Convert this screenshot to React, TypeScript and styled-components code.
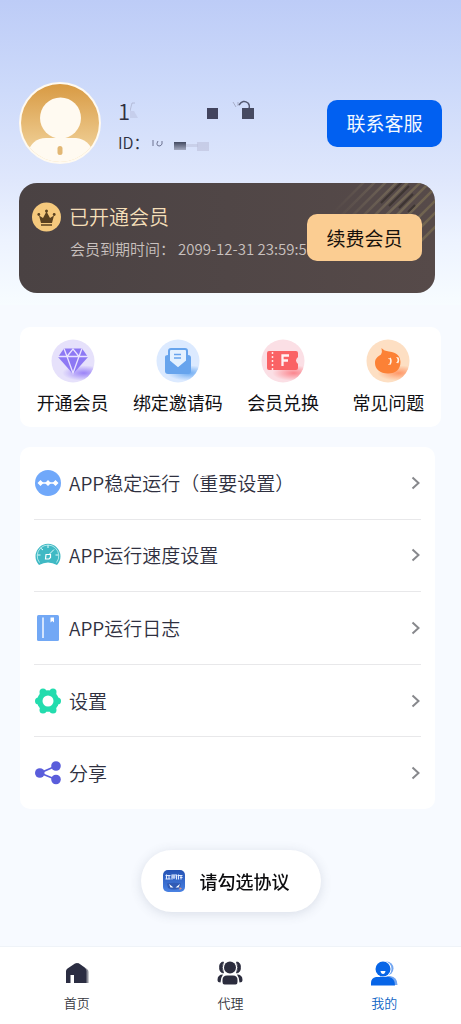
import React from 'react';
import styled, { createGlobalStyle } from 'styled-components';

const GlobalStyle = createGlobalStyle`
  * { box-sizing: border-box; }
  body {
    margin: 0;
    background: #f7faff;
    font-family: "Noto Sans CJK SC", sans-serif;
    font-weight: 350;
    color: #2f3040;
  }
  button { font-family: inherit; border: 0; padding: 0; cursor: pointer; }
  a { color: inherit; text-decoration: none; }
  svg { display: block; flex: none; }
`;

const Page = styled.div`
  display: flex;
  flex-direction: column;
  min-height: 100vh;
`;

const Hero = styled.header`
  padding: 82px 19px 12px;
  background: linear-gradient(#bdccf7 0, #cddafa 90px, #dfe7fc 180px, #edf3ff 240px, #f7fcff 100%);
`;

const Profile = styled.div`
  display: flex;
  align-items: center;
  gap: 17px;
  height: 82px;
`;

const Identity = styled.div`
  display: flex;
  flex: 1;
  flex-direction: column;
  gap: 4px;
  min-width: 0;
  padding-top: 6px;
`;

const IdentityLine = styled.div<{ $size: number }>`
  display: flex;
  align-items: center;
  height: 28px;
  font-size: ${(p) => p.$size}px;
  line-height: 28px;
`;

const ActionButton = styled.button<{ $tone: 'blue' | 'gold' }>`
  flex: none;
  width: 115px;
  height: 47px;
  border-radius: 10px;
  font-size: 19px;
  line-height: 28px;
  color: ${(p) => (p.$tone === 'blue' ? '#f4f9ff' : '#17120c')};
  background: ${(p) => (p.$tone === 'blue' ? '#0160f1' : '#fbcd92')};
`;

const MemberCard = styled.section`
  position: relative;
  overflow: hidden;
  height: 110px;
  margin: 19px 7px 0 0;
  padding: 19px 13px;
  border-radius: 18px;
  background: linear-gradient(90deg, #4a4243, #564a49);

  ${ActionButton} {
    position: absolute;
    top: 31px;
    right: 13px;
  }
`;

const Stripes = styled.svg`
  position: absolute;
  top: 0;
  right: 0;
`;

const MemberTitle = styled.h2`
  display: flex;
  align-items: center;
  gap: 7px;
  margin: 0;
  font-size: 20px;
  font-weight: 350;
  line-height: 30px;
  color: #f4dfb9;
`;

const Expiry = styled.p`
  display: flex;
  gap: 3px;
  margin: 5px 0 0 38px;
  font-size: 15px;
  line-height: 24px;
  white-space: nowrap;
  color: #c9c1bf;
`;

const Main = styled.main`
  display: flex;
  flex: 1;
  flex-direction: column;
  gap: 20px;
  padding: 22px 20px 40px;
`;

const Shortcuts = styled.nav`
  display: grid;
  grid-template-columns: repeat(4, 1fr);
  padding: 12px 0 10px;
  border-radius: 10px;
  background: #fff;
`;

const Shortcut = styled.a`
  display: flex;
  flex-direction: column;
  align-items: center;
  gap: 5px;
  padding-bottom: 1px;
  font-size: 18px;
  font-weight: 400;
  line-height: 28px;
  white-space: nowrap;
  color: #101013;
`;

const Menu = styled.nav`
  display: flex;
  flex-direction: column;
  min-height: 362px;
  margin-right: 6px;
  padding: 0 14px;
  border-radius: 10px;
  background: #fff;
`;

const MenuRow = styled.a`
  display: flex;
  flex: 1;
  align-items: center;
  gap: 8px;
  padding: 0 1px;
  border-bottom: 1px solid #e8e8ea;
  font-size: 19px;
  line-height: 28px;

  &:last-child { border-bottom: 0; }
  span { flex: 1; }
`;

const TabBar = styled.nav`
  display: grid;
  grid-template-columns: repeat(3, 1fr);
  height: 78px;
  border-top: 1px solid #eff3f8;
  background: #fff;
`;

const Tab = styled.a<{ $active?: boolean }>`
  display: flex;
  flex-direction: column;
  align-items: center;
  gap: 6px;
  padding-top: 12px;
  font-size: 13px;
  line-height: 20px;
  color: ${(p) => (p.$active ? '#0d63c4' : '#36373f')};
`;

const Toast = styled.div`
  position: fixed;
  bottom: 112px;
  left: 50%;
  display: flex;
  align-items: center;
  gap: 15px;
  height: 62px;
  padding: 0 31px 0 22px;
  border-radius: 31px;
  background: #fff;
  box-shadow: 0 2px 12px rgba(60, 75, 105, 0.16);
  font-size: 18px;
  font-weight: 500;
  line-height: 28px;
  white-space: nowrap;
  color: #0c0c0e;
  transform: translateX(-50%);
`;

const Avatar = () => (
  <svg width="82" height="82" viewBox="0 0 82 82" role="img" aria-label="头像">
    <defs>
      <linearGradient id="gold" x1="0" y1="0" x2="0" y2="1">
        <stop offset="0" stopColor="#d89a43" />
        <stop offset="1" stopColor="#f4d9a5" />
      </linearGradient>
      <clipPath id="face"><circle cx="41" cy="41" r="39" /></clipPath>
    </defs>
    <circle cx="41" cy="41" r="41" fill="#fffaf1" />
    <circle cx="41" cy="41" r="39" fill="url(#gold)" />
    <g clipPath="url(#face)" fill="#fffaf1">
      <circle cx="41.5" cy="36" r="20.500" />
      <path d="M8 72Q13 56 27 56H57Q70 57 75 72V82H8Z" />
      <rect x="38.500" y="64" width="5" height="9" rx="2.500" fill="#e2b774" />
    </g>
  </svg>
);

const NameMask = () => (
  <svg width="132" height="24" viewBox="2 0 132 24" aria-hidden="true">
    <path d="M2 13L4 5H7" fill="none" stroke="#a9afcb" opacity=".7" />
    <path d="M2 13H6L10 20H2Z" fill="#bec5e3" opacity=".6" />
    <rect x="79" y="10" width="11" height="11" fill="#42445e" />
    <path d="M105 4l3 5M110 4v4" stroke="#a9afc9" />
    <path d="M111 7Q115 1 120 5Q122 7 121 11" fill="none" stroke="#555a72" strokeWidth="1.500" />
    <rect x="114" y="10" width="12" height="11" fill="#464a61" />
  </svg>
);

const IdMask = () => (
  <svg width="60" height="20" viewBox="4 0 60 20" aria-hidden="true">
    <path d="M7 8V14M12 9Q9 14 14 14Q17 13 16 9" fill="none" stroke="#6d7391" />
    <defs>
      <linearGradient id="fade" x1="0" y1="0" x2="0" y2="1">
        <stop offset="0" stopColor="#424960" />
        <stop offset="1" stopColor="#a4aac0" />
      </linearGradient>
    </defs>
    <rect x="28" y="10" width="12" height="8" fill="url(#fade)" />
    <rect x="40" y="12" width="12" height="3" fill="#b9bed7" opacity=".5" />
    <rect x="51" y="10" width="12" height="9" fill="#bdbfda" opacity=".6" />
  </svg>
);

const CrownBadge = () => (
  <svg width="30" height="30" viewBox="0 0 30 30" aria-hidden="true">
    <circle cx="14.500" cy="15" r="14.500" fill="#f5c97d" />
    <path d="M7 13.500L11 16L14.500 9.500L18 16L22 13.500L20 21H9Z" fill="#5a4120" />
    <path d="M9 23H20" stroke="#5a4120" strokeWidth="1.500" />
    <g fill="#5a4120">
      <circle cx="14.500" cy="9" r="1.500" /><circle cx="6.800" cy="12.500" r="1.400" /><circle cx="22.200" cy="12.500" r="1.400" />
    </g>
  </svg>
);

const CardStripes = () => (
  <Stripes width="104" height="72" viewBox="0 0 104 72" aria-hidden="true">
    <defs>
      <linearGradient id="sheen" gradientUnits="userSpaceOnUse" x1="0" y1="0" x2="104" y2="0">
        <stop offset="0" stopColor="#7b6f5e" stopOpacity="0" />
        <stop offset=".6" stopColor="#84785f" stopOpacity=".6" />
        <stop offset="1" stopColor="#75684e" stopOpacity=".8" />
      </linearGradient>
    </defs>
    <path
      d="M0 32L34 -2M9 34L45 -2M18 36L56 -2M28 37L67 -2M39 37L78 -2M50 37L90 -1M61 37L101 -3M72 37L106 3M80 42L106 16M86 48L106 28M90 58L106 42"
      stroke="url(#sheen)" strokeWidth="2.500"
    />
    <path d="M50 20L72 -2M58 23L78 3M68 25L82 11M77 29L84 22" stroke="#3d3532" strokeWidth="2" />
  </Stripes>
);

const Disc = ({ id, edge, glow, children }: { id: string; edge: string; glow: string; children: React.ReactNode }) => (
  <svg width="44" height="44" viewBox="0 0 44 44" aria-hidden="true">
    <defs>
      <radialGradient id={id} cx=".75" cy=".78" r=".5" gradientTransform="translate(0 .5) scale(1 .36)">
        <stop offset="0" stopColor={glow} />
        <stop offset="1" stopColor={glow} stopOpacity="0" />
      </radialGradient>
    </defs>
    <circle cx="22" cy="22" r="21.500" fill={edge} />
    <circle cx="22" cy="22" r="21.500" fill={`url(#${id})`} />
    {children}
  </svg>
);

const DiamondIcon = () => (
  <Disc id="glowViolet" edge="#e6e1fb" glow="#9b83f8">
    <path d="M13 9.500H31L37 18L22 35L7 18Z" fill="#8d78f4" />
    <path d="M7 17.500H37M13 9.500L16 17.500L22 34L28 17.500L31 9.500M16 17.500L22 10L28 17.500" fill="none" stroke="#e9e3ff" strokeWidth="1.300" />
  </Disc>
);

const InviteIcon = () => (
  <Disc id="glowBlue" edge="#dceaff" glow="#70adf3">
    <path d="M9 18Q9 16 12 16H32Q35 16 35 19V32Q35 35 32 35H12Q9 35 9 32Z" fill="#67a4ed" />
    <path d="M13 12Q13 10 15 10H29Q31 10 31 12V22L22 29.500L13 22Z" fill="#e4f1ff" stroke="#67a4ed" strokeWidth="2" />
    <path d="M18 15.500H25M18 19H25" stroke="#67a4ed" strokeWidth="1.500" />
  </Disc>
);

const TicketIcon = () => (
  <Disc id="glowRed" edge="#fbdfe5" glow="#fb858d">
    <path d="M8 12H35Q37 12 37 14V18Q33 21.500 37 25V29Q37 31 35 31H8Q6 31 6 29V14Q6 12 8 12Z" fill="#fa6265" />
    <path d="M11.500 13V31" stroke="#ffe6e8" strokeWidth="1.500" strokeDasharray="2 2" />
    <path d="M21.500 27V16.500H28M21.500 21.500H27" fill="none" stroke="#fff2f3" strokeWidth="2.300" />
  </Disc>
);

const QuestionIcon = () => (
  <Disc id="glowOrange" edge="#fddfc3" glow="#ff9868">
    <path d="M15.500 9Q18 12 23 12.500C31 13 34.500 18 34.500 23C34.500 30 30 34.500 22 34.500C14 34.500 9 30 9 24C9 19 12 17.500 15 15.500Q16.500 13 15.500 9Z" fill="#fc8136" />
    <path d="M23 19V19.500M23 25V25.500M31 18.500V19M31 23.500V24" stroke="#fff3e6" strokeWidth="2" />
    <path d="M24 19Q26 22 24 25.500M31.500 18.500Q33.500 21 31.500 24" fill="none" stroke="#fff3e6" strokeWidth="1.500" />
  </Disc>
);

const StabilityIcon = () => (
  <svg width="26" height="26" viewBox="0 0 26 26" aria-hidden="true">
    <circle cx="13" cy="13" r="13" fill="#70a8fa" />
    <path d="M5 13H21" stroke="#fff" strokeWidth="1.500" />
    <path d="M5.500 10L8.500 13L5.500 16L2.500 13ZM13 10L16 13L13 16L10 13ZM20.500 10L23.500 13L20.500 16L17.500 13Z" fill="#fff" />
  </svg>
);

const GaugeIcon = () => (
  <svg width="26" height="26" viewBox="0 0 26 26" aria-hidden="true">
    <path d="M4 23A12.500 12.500 0 1 1 22 23Q13 18 4 23Z" fill="#3fb9c4" />
    <path d="M4.500 20.500A10.800 10.800 0 1 1 21.500 20.500" fill="none" stroke="#c9f1f3" strokeWidth=".8" />
    <path d="M13 3V6M2.500 13H5.500M20.500 13H23.500M5.500 6L8 8M14.500 12L19 7.500" stroke="#e5fbfb" />
    <path d="M11 12.500H15.500V15.500L14 17H10.500Z" fill="none" stroke="#fff" strokeWidth="1.200" />
  </svg>
);

const LogIcon = () => (
  <svg width="26" height="26" viewBox="0 0 26 26" aria-hidden="true">
    <rect x="2" width="22" height="26" rx="1.500" fill="#72a8f5" />
    <path d="M8 2.500V23" stroke="#f4f9ff" strokeWidth="1.500" />
    <path d="M15.500 2.500H19V7.500L17.250 6L15.500 7.500Z" fill="#fff" />
  </svg>
);

const GearIcon = () => (
  <svg width="26" height="26" viewBox="0 0 26 26" aria-hidden="true">
    <g fill="#23dcae">
      <circle cx="13" cy="13" r="10.800" />
      <circle cx="22.500" cy="13" r="3.500" />
      <circle cx="18" cy="4" r="3.500" />
      <circle cx="8" cy="4" r="3.500" />
      <circle cx="3.500" cy="13" r="3.500" />
      <circle cx="8" cy="22" r="3.500" />
      <circle cx="18" cy="22" r="3.500" />
    </g>
    <circle cx="13" cy="13" r="5.500" fill="#fff" />
  </svg>
);

const ShareIcon = () => (
  <svg width="26" height="26" viewBox="0 0 26 26" aria-hidden="true">
    <path d="M21 6L5 13L21 19.500" fill="none" stroke="#5a5ddb" strokeWidth="1.700" />
    <g fill="#5a5ddb"><circle cx="4.800" cy="13" r="4.800" /><circle cx="21" cy="6" r="4.800" /><circle cx="21" cy="19.500" r="4.800" /></g>
  </svg>
);

const Chevron = () => (
  <svg width="9" height="14" viewBox="0 0 9 14" aria-hidden="true">
    <path d="M1.500 1.500L7.500 7L1.500 12.500" fill="none" stroke="#87888c" strokeWidth="2" />
  </svg>
);

const HomeIcon = () => (
  <svg width="30" height="28" viewBox="0 0 30 28" aria-hidden="true">
    <path d="M16 4L25 10Q26.500 11 26.500 13V24H16Z" fill="#8d8f99" />
    <path d="M4 12Q4 10.500 5.500 9.500L13 4.500Q15 3.500 17 4.500L22.500 8.500Q24.500 10 24.500 12V24H12V16H8.500V24H4Z" fill="#2b2d42" />
  </svg>
);

const AgentsIcon = () => (
  <svg width="30" height="28" viewBox="0 0 30 28" aria-hidden="true">
    <g fill="#2b2c3d">
      <circle cx="15" cy="8.500" r="6" />
      <path d="M8.500 3Q4.500 3 4.500 8.500Q4.500 13.500 8.500 14Q6 8.500 8.500 3ZM21.500 3Q25.500 3 25.500 8.500Q25.500 13.500 21.500 14Q24 8.500 21.500 3Z" stroke="#2b2c3d" strokeWidth=".8" />
      <path d="M12 16.500H18Q22.500 16.500 22.500 21V23Q22.500 25.500 20.500 25.500H9.500Q7.500 25.500 7.500 23V21Q7.500 16.500 12 16.500Z" />
      <path d="M8 15.500Q2.500 15.500 2.500 21Q2.500 23.500 5.500 23.500Q5.500 19 8 15.500ZM22 15.500Q27.500 15.500 27.500 21Q27.500 23.500 24.500 23.500Q24.500 19 22 15.500Z" />
    </g>
  </svg>
);

const MineIcon = () => (
  <svg width="30" height="28" viewBox="0 0 30 28" aria-hidden="true">
    <g fill="#73a6f1"><circle cx="17.500" cy="9.500" r="7" /><path d="M11 17H21Q28.500 18 28.500 26H11Z" /></g>
    <circle cx="14.500" cy="10" r="8" fill="#fff" />
    <g fill="#0765e7">
      <circle cx="14" cy="10" r="7.500" />
      <path d="M7 18H20Q26 19 26 26.500H2V24Q2 19 7 18Z" />
    </g>
    <path d="M11.500 12H16.500Q16 15 14 15Q12 15 11.500 12Z" fill="#fff" />
  </svg>
);

const AppBadge = () => (
  <svg width="22" height="22" viewBox="0 0 22 22" aria-hidden="true">
    <defs>
      <linearGradient id="app" x1="0" y1="0" x2="0" y2="1">
        <stop offset="0" stopColor="#2452b4" /><stop offset="1" stopColor="#4a82e3" />
      </linearGradient>
    </defs>
    <rect width="22" height="22" rx="5" fill="url(#app)" />
    <path d="M2.500 5.500H7.500M2.500 9H7.500M3.500 4.500V9.500M6 5V9.500M8.500 5H13.500V9.500M9 7H12.500M9 5V9.500M11 5V9M14.500 5.500H19.500M15.500 4.500V9.500M17 7.500H19.500M18 5V9.500" fill="none" stroke="#e2ebff" strokeWidth="1.100" />
    <path d="M4 13.500Q11 12 18 13.500L17 18Q11 21 5 18Z" fill="#315bb5" />
    <path d="M6 14L10.500 17.500L7.500 17.500ZM17 14L12.500 17.500L15.500 17.500Z" fill="#fff" />
    <path d="M16.500 17l2.500 1.500l-2.500 1.500Z" fill="#d79489" />
  </svg>
);

const shortcuts = [
  { label: '开通会员', Icon: DiamondIcon },
  { label: '绑定邀请码', Icon: InviteIcon },
  { label: '会员兑换', Icon: TicketIcon },
  { label: '常见问题', Icon: QuestionIcon },
];

const menu = [
  { label: 'APP稳定运行（重要设置）', Icon: StabilityIcon },
  { label: 'APP运行速度设置', Icon: GaugeIcon },
  { label: 'APP运行日志', Icon: LogIcon },
  { label: '设置', Icon: GearIcon },
  { label: '分享', Icon: ShareIcon },
];

const tabs = [
  { label: '首页', Icon: HomeIcon },
  { label: '代理', Icon: AgentsIcon },
  { label: '我的', Icon: MineIcon, active: true },
];

export default function App() {
  return (
    <Page>
      <GlobalStyle />
      <Hero>
        <Profile>
          <Avatar />
          <Identity>
            <IdentityLine $size={22}>1<NameMask /></IdentityLine>
            <IdentityLine $size={16}>ID：<IdMask /></IdentityLine>
          </Identity>
          <ActionButton type="button" $tone="blue">联系客服</ActionButton>
        </Profile>
        <MemberCard>
          <CardStripes />
          <MemberTitle><CrownBadge />已开通会员</MemberTitle>
          <Expiry><span>会员到期时间：</span><time>2099-12-31 23:59:59</time></Expiry>
          <ActionButton type="button" $tone="gold">续费会员</ActionButton>
        </MemberCard>
      </Hero>
      <Main>
        <Shortcuts>
          {shortcuts.map(({ label, Icon }) => (
            <Shortcut key={label} href="#"><Icon />{label}</Shortcut>
          ))}
        </Shortcuts>
        <Menu>
          {menu.map(({ label, Icon }) => (
            <MenuRow key={label} href="#"><Icon /><span>{label}</span><Chevron /></MenuRow>
          ))}
        </Menu>
      </Main>
      <TabBar>
        {tabs.map(({ label, Icon, active }) => (
          <Tab key={label} href="#" $active={active}><Icon />{label}</Tab>
        ))}
      </TabBar>
      <Toast role="status"><AppBadge />请勾选协议</Toast>
    </Page>
  );
}
